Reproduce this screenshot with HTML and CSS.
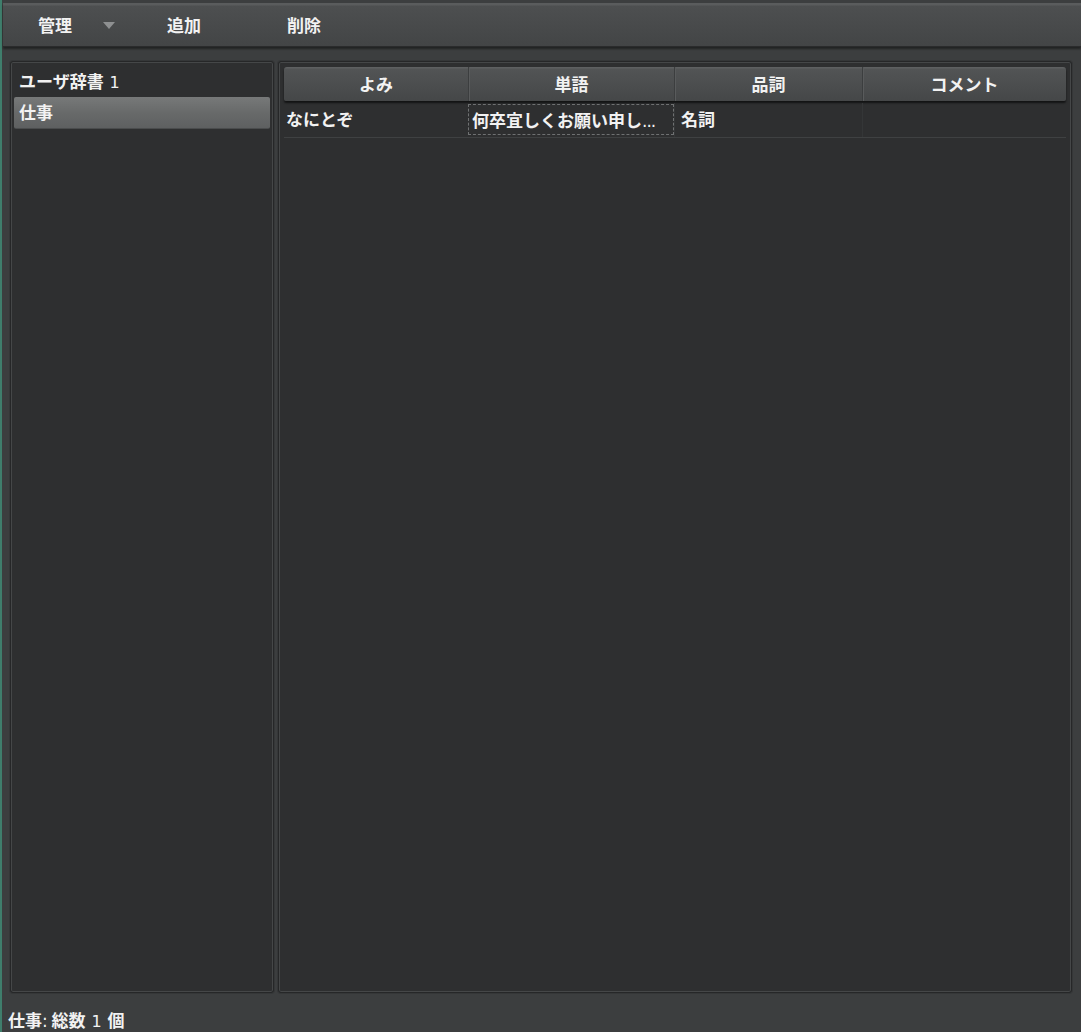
FILE: index.html
```html
<!DOCTYPE html>
<html lang="ja">
<head>
<meta charset="utf-8">
<link rel="stylesheet" href="styles.css">
</head>
<body>
<div class="window">
  <div class="toolbar">
    <div class="tb-btn manage">管理<span class="caret"></span></div>
    <div class="tb-btn add">追加</div>
    <div class="tb-btn del">削除</div>
  </div>
  <div class="main">
    <div class="side">
      <div class="side-title">ユーザ辞書 <span class="num">1</span></div>
      <div class="side-item sel">仕事</div>
    </div>
    <div class="content">
      <div class="thead">
        <div class="th c1">よみ</div>
        <div class="th c2">単語</div>
        <div class="th c3">品詞</div>
        <div class="th c4">コメント</div>
      </div>
      <div class="trow">
        <div class="td c1">なにとぞ</div>
        <div class="td c2 focus">何卒宜しくお願い申し<span class="ell">...</span></div>
        <div class="td c3">名詞</div>
        <div class="td c4"></div>
      </div>
    </div>
  </div>
  <div class="status">仕事<span class="colon">:</span> 総数 <span class="num">1</span> 個</div>
</div>
</body>
</html>
```
FILE: styles.css
```css
html, body {
  margin: 0;
  padding: 0;
  height: 100%;
}
body {
  background: #3c3e3f;
  font-family: "Noto Sans CJK JP", "Noto Sans", sans-serif;
  color: #f2f2f2;
  font-size: 17px;
  overflow: hidden;
}
.window {
  height: 1032px;
  box-sizing: border-box;
  border-left: 2px solid #3f7e6c;
  padding-left: 1px;
  padding-top: 3px;
  display: flex;
  flex-direction: column;
}
.toolbar {
  flex: none;
  height: 44px;
  box-sizing: border-box;
  background: linear-gradient(#5a5c5d 0, #5a5c5d 2px, #4d4f50 3px, #434546 100%);
  border-bottom: 1px solid #2a2b2c;
  box-shadow: 0 2px 2px rgba(0,0,0,0.45);
  display: flex;
  align-items: center;
  font-weight: 700;
  position: relative;
  z-index: 1;
}
.tb-btn {
  line-height: 20px;
}
.manage {
  margin-left: 35px;
  display: flex;
  align-items: center;
}
.caret {
  display: inline-block;
  width: 0;
  height: 0;
  border-left: 6px solid transparent;
  border-right: 6px solid transparent;
  border-top: 7px solid #8e9091;
  margin-left: 31px;
  margin-top: 2px;
}
.add {
  margin-left: 52px;
}
.del {
  margin-left: 86px;
}
.main {
  flex: none;
  display: flex;
  padding: 14px 9px 0 7px;
  gap: 4px;
}
.side {
  width: 264px;
  height: 932px;
  box-sizing: border-box;
  background: #2e2f30;
  border: 1px solid #262728;
  box-shadow: inset 0 0 0 1px #454748, 0 0 0 1px #353738;
  border-radius: 3px;
  padding: 3px 3px;
}
.side-title {
  height: 32px;
  line-height: 32px;
  padding-left: 5px;
  font-weight: 700;
}
.num {
  font-family: "DejaVu Sans", sans-serif;
  font-weight: 400;
  font-size: 16px;
  padding: 0 2px;
}
.colon {
  font-family: "DejaVu Sans", sans-serif;
  font-weight: 400;
}
.side-item {
  height: 32px;
  line-height: 30px;
  padding-left: 5px;
  font-weight: 700;
  box-sizing: border-box;
}
.side-item.sel {
  background: linear-gradient(#777979, #686a6a 50%, #5e6061);
  border-radius: 2px;
  border-bottom: 1px solid #4a4c4d;
}
.content {
  width: 794px;
  height: 932px;
  box-sizing: border-box;
  background: #2e2f30;
  border: 1px solid #262728;
  box-shadow: inset 0 0 0 1px #454748, 0 0 0 1px #353738;
  border-radius: 3px;
  padding: 5px 5px;
}
.thead {
  display: flex;
  height: 34px;
  background: linear-gradient(#5e6061 0, #5e6061 1px, #525455 2px, #454748 100%);
  border-radius: 3px 3px 2px 2px;
  box-shadow: 0 2px 2px rgba(0,0,0,0.6);
  font-weight: 700;
}
.th {
  text-align: center;
  line-height: 34px;
  box-sizing: border-box;
}
.th + .th {
  border-left: 1px solid #3c3e3f;
  box-shadow: inset 1px 0 0 #595b5c;
}
.c1 { width: 184px; }
.c2 { width: 206px; }
.c3 { width: 188px; }
.c4 { flex: 1; }
.trow {
  display: flex;
  height: 35px;
  margin-top: 2px;
  border-bottom: 1px solid #3f4142;
  box-sizing: border-box;
  font-weight: 700;
}
.td {
  line-height: 32px;
  padding-left: 2px;
  box-sizing: border-box;
  white-space: nowrap;
  overflow: hidden;
}
.td + .td {
  border-left: 1px solid #343637;
}
.td.c3 {
  padding-left: 6px;
}
.td.focus {
  border: 1px dashed #6f7172;
  padding-left: 3px;
  height: 31px;
  margin-top: 1px;
  line-height: 29px;
}
.ell {
  font-family: "DejaVu Sans", sans-serif;
  font-weight: 400;
  letter-spacing: -1px;
}
.status {
  flex: 1;
  line-height: 36px;
  padding-top: 9px;
  padding-left: 5px;
  font-weight: 700;
}
```
